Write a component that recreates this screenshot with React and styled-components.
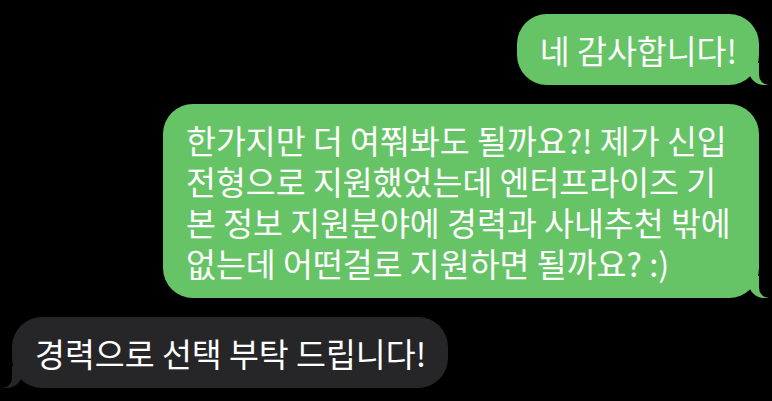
import React from "react";
import styled, { createGlobalStyle, css } from "styled-components";

const GlobalStyle = createGlobalStyle`
  html, body {
    margin: 0;
    padding: 0;
    background: #000000;
  }
  body {
    font-family: "Noto Sans CJK KR", "Noto Sans", sans-serif;
  }
`;

const Thread = styled.div`
  display: flex;
  flex-direction: column;
  gap: 19px;
  padding: 14px 13px 14px 12px;
  min-height: 401px;
  box-sizing: border-box;
  background: #000000;
`;

const sentTail = css`
  &::before {
    right: -10px;
    background: #66c467;
    border-bottom-left-radius: 16px 14px;
  }
  &::after {
    right: -26px;
    border-bottom-left-radius: 10px;
  }
`;

const receivedTail = css`
  &::before {
    left: -10px;
    background: #262628;
    border-bottom-right-radius: 16px 14px;
  }
  &::after {
    left: -26px;
    border-bottom-right-radius: 10px;
  }
`;

const Bubble = styled.div`
  position: relative;
  max-width: 596px;
  box-sizing: border-box;
  padding: 15px 22px 15px 23px;
  border-radius: 30px;
  color: #ffffff;
  font-size: 32.5px;
  line-height: 41px;
  letter-spacing: 0;
  align-self: ${(p) => (p.$sent ? "flex-end" : "flex-start")};
  background: ${(p) => (p.$sent ? "#66c467" : "#262628")};

  &::before,
  &::after {
    content: "";
    position: absolute;
    bottom: 0;
    height: 22px;
  }
  &::before {
    width: 20px;
  }
  &::after {
    width: 26px;
    background: #000000;
  }

  ${(p) => (p.$sent ? sentTail : receivedTail)}
`;

const messages = [
  { id: 1, sent: true, text: "네 감사합니다!" },
  {
    id: 2,
    sent: true,
    text:
      "한가지만 더 여쭤봐도 될까요?! 제가 신입 전형으로 지원했었는데 엔터프라이즈 기본 정보 지원분야에 경력과 사내추천 밖에 없는데 어떤걸로 지원하면 될까요? :)",
  },
  { id: 3, sent: false, text: "경력으로 선택 부탁 드립니다!" },
];

export default function App() {
  return (
    <>
      <GlobalStyle />
      <Thread>
        {messages.map((m) => (
          <Bubble key={m.id} $sent={m.sent}>
            {m.text}
          </Bubble>
        ))}
      </Thread>
    </>
  );
}
